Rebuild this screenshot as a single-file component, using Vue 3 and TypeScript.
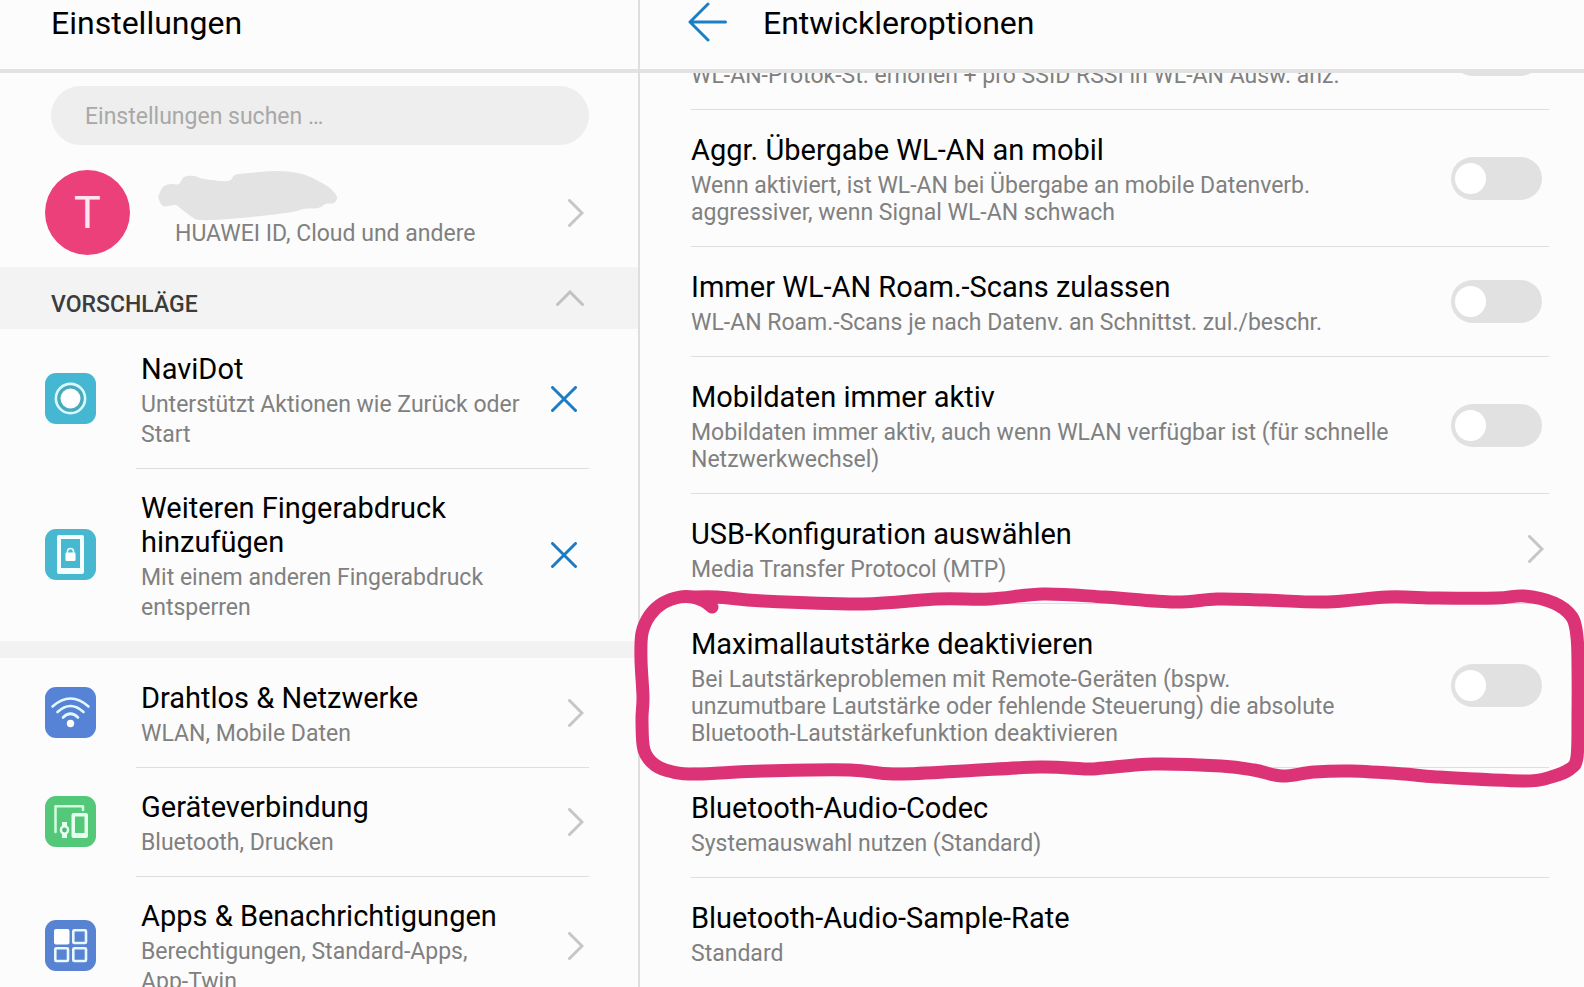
<script setup lang="ts">
import { ref } from 'vue'

type Point = [number, number]
type IconName = 'dot' | 'lock' | 'wifi' | 'devices' | 'apps'

interface Entry {
  id: string
  title: string
  text: string
  icon: IconName
}

interface Option {
  id: string
  title?: string
  text: string
  kind: 'switch' | 'link' | 'plain'
  on?: boolean
  marked?: boolean
}

const query = ref('')

const suggestions: Entry[] = [
  { id: 'navidot', title: 'NaviDot', text: 'Unterstützt Aktionen wie Zurück oder Start', icon: 'dot' },
  { id: 'finger', title: 'Weiteren Fingerabdruck hinzufügen', text: 'Mit einem anderen Fingerabdruck entsperren', icon: 'lock' },
]

const categories: Entry[] = [
  { id: 'wireless', title: 'Drahtlos & Netzwerke', text: 'WLAN, Mobile Daten', icon: 'wifi' },
  { id: 'devices', title: 'Geräteverbindung', text: 'Bluetooth, Drucken', icon: 'devices' },
  { id: 'apps', title: 'Apps & Benachrichtigungen', text: 'Berechtigungen, Standard-Apps,\nApp-Twin', icon: 'apps' },
]

const options = ref<Option[]>([
  { id: 'protocol', text: 'WL-AN-Protok-St. erhöhen + pro SSID RSSI in WL-AN Ausw. anz.', kind: 'switch', on: false },
  { id: 'handover', title: 'Aggr. Übergabe WL-AN an mobil', text: 'Wenn aktiviert, ist WL-AN bei Übergabe an mobile Datenverb.\naggressiver, wenn Signal WL-AN schwach', kind: 'switch', on: false },
  { id: 'roam', title: 'Immer WL-AN Roam.-Scans zulassen', text: 'WL-AN Roam.-Scans je nach Datenv. an Schnittst. zul./beschr.', kind: 'switch', on: false },
  { id: 'mobile', title: 'Mobildaten immer aktiv', text: 'Mobildaten immer aktiv, auch wenn WLAN verfügbar ist (für schnelle Netzwerkwechsel)', kind: 'switch', on: false },
  { id: 'usb', title: 'USB-Konfiguration auswählen', text: 'Media Transfer Protocol (MTP)', kind: 'link' },
  { id: 'volume', title: 'Maximallautstärke deaktivieren', text: 'Bei Lautstärkeproblemen mit Remote-Geräten (bspw.\nunzumutbare Lautstärke oder fehlende Steuerung) die absolute\nBluetooth-Lautstärkefunktion deaktivieren', kind: 'switch', on: false, marked: true },
  { id: 'codec', title: 'Bluetooth-Audio-Codec', text: 'Systemauswahl nutzen (Standard)', kind: 'plain' },
  { id: 'rate', title: 'Bluetooth-Audio-Sample-Rate', text: 'Standard', kind: 'plain' },
])

/* Smooth curve through a list of points (Catmull-Rom as cubic Béziers). */
function smooth(points: Point[]): string {
  let d = `M${points[0][0]} ${points[0][1]}`
  for (let i = 0; i < points.length - 1; i++) {
    const a = points[Math.max(i - 1, 0)]
    const b = points[i]
    const c = points[i + 1]
    const e = points[Math.min(i + 2, points.length - 1)]
    d += `C${b[0] + (c[0] - a[0]) / 6} ${b[1] + (c[1] - a[1]) / 6} ${c[0] - (e[0] - b[0]) / 6} ${c[1] - (e[1] - b[1]) / 6} ${c[0]} ${c[1]}`
  }
  return d
}

const marker = smooth([
  [82, 21], [74, 15], [63, 11], [50, 11], [33, 17], [20, 29], [12, 47], [11, 74], [13, 111], [12, 134], [14, 164],
  [25, 179], [43, 186], [67, 188], [133, 185], [220, 184], [263, 188], [333, 185], [410, 181], [457, 183],
  [474, 182], [524, 178], [591, 180], [624, 184], [652, 190], [684, 186], [721, 185], [774, 188], [807, 191],
  [894, 195], [921, 191], [940, 183], [947, 171], [948, 130], [948, 80], [947, 51], [942, 31], [924, 17], [894, 10],
  [867, 12], [807, 12], [757, 11], [697, 16], [634, 14], [587, 13], [544, 16], [474, 11], [413, 8], [360, 13],
  [307, 13], [233, 18], [133, 15], [87, 11], [63, 11],
])

const blot = smooth([
  [1, 27], [6, 17], [14, 14], [22, 14], [27, 7], [37, 6], [47, 9], [71, 11], [78, 5], [92, 3], [120, 1], [145, 4],
  [165, 13], [174, 19], [180, 27], [177, 33], [169, 34], [161, 38], [147, 39], [129, 43], [72, 49], [43, 50],
  [35, 47], [23, 38], [18, 35], [6, 36], [1, 27],
])
</script>

<template>
  <div class="screen">
    <section class="pane pane-left">
      <header class="bar"><h1>Einstellungen</h1></header>

      <div class="search">
        <input v-model="query" type="search" aria-label="Einstellungen suchen" placeholder="Einstellungen suchen …" />
      </div>

      <a class="account" href="#account">
        <span class="avatar">T</span>
        <span class="account-text">
          <svg class="blot" viewBox="0 0 181 51" aria-hidden="true"><path :d="blot" /></svg>
          <span class="text">HUAWEI ID, Cloud und andere</span>
        </span>
        <svg class="chevron" viewBox="0 0 16 28" aria-hidden="true"><path d="M1.5 1.5 14 14 1.5 26.5" /></svg>
      </a>

      <button class="group" type="button" aria-expanded="true">
        <span>VORSCHLÄGE</span>
        <svg class="fold" viewBox="0 0 28 16" aria-hidden="true"><path d="M1.5 14.5 14 2 26.5 14.5" /></svg>
      </button>

      <ul class="entries entries-suggested">
        <li v-for="item in suggestions" :key="item.id" class="entry">
          <svg v-if="item.icon === 'dot'" class="icon" viewBox="0 0 51 51" aria-hidden="true">
            <rect width="51" height="51" rx="11" fill="#45b7d2" />
            <circle cx="25.5" cy="25.5" r="14.6" fill="#4aa9bc" stroke="#d9fbff" stroke-width="2.6" />
            <circle cx="25.5" cy="25.5" r="10" fill="#fff" />
          </svg>
          <svg v-else class="icon" viewBox="0 0 51 51" aria-hidden="true">
            <rect width="51" height="51" rx="11" fill="#48b8d0" />
            <path fill="#f4ffff" fill-rule="evenodd" d="M14 6h23q2 0 2 2v35q0 2-2 2H14q-2 0-2-2V8q0-2 2-2zM16 10v29h19V10z" />
            <rect x="20.5" y="23.5" width="10" height="8.5" rx="1" fill="#fff" />
            <path d="M22.5 24v-1.5a3 3 0 0 1 6 0V24" fill="none" stroke="#eaffff" stroke-width="1.5" />
          </svg>
          <div class="body">
            <h3>{{ item.title }}</h3>
            <p class="text">{{ item.text }}</p>
          </div>
          <button class="dismiss" type="button" :aria-label="item.title + ' ausblenden'">
            <svg viewBox="0 0 26 26" aria-hidden="true"><path d="M1.5 1.5 24.5 24.5M24.5 1.5 1.5 24.5" /></svg>
          </button>
        </li>
      </ul>

      <nav class="entries">
        <a v-for="item in categories" :key="item.id" class="entry" :href="'#' + item.id">
          <svg v-if="item.icon === 'wifi'" class="icon" viewBox="0 0 51 51" aria-hidden="true">
            <rect width="51" height="51" rx="11" fill="#5783d6" />
            <g fill="none" stroke="#e4f8ff" stroke-width="2.6" stroke-linecap="round">
              <path d="M7.5 19.5Q25.5 3.5 43.5 19.5" />
              <path d="M12.5 25Q25.5 13 38.5 25" />
              <path d="M18 30.5Q25.5 23 33 30.5" />
            </g>
            <circle cx="25.5" cy="36.5" r="3.7" fill="#fff" />
          </svg>
          <svg v-else-if="item.icon === 'devices'" class="icon" viewBox="0 0 51 51" aria-hidden="true">
            <rect width="51" height="51" rx="11" fill="#53c878" />
            <path d="M10.5 36V10.3H38V14" fill="none" stroke="#d3ffe0" stroke-width="2.5" stroke-linecap="round" stroke-linejoin="round" />
            <path fill="#e6fff0" fill-rule="evenodd" d="M28.5 17H41q2 0 2 2v21q0 2-2 2H28.5q-2 0-2-2V19q0-2 2-2zM30 20.5V37h9.5V20.5z" />
            <path fill="#e6fff0" d="M17 26h5v5h-5zM17 37h5v5h-5z" />
            <circle cx="19.5" cy="34" r="3.6" fill="#53b878" stroke="#e6fff0" stroke-width="2.4" />
          </svg>
          <svg v-else class="icon" viewBox="0 0 51 51" aria-hidden="true">
            <rect width="51" height="51" rx="11" fill="#5783d2" />
            <rect x="9" y="9" width="15.5" height="15.5" rx="2" fill="#fff" />
            <g fill="none" stroke="#e8f8ff" stroke-width="2.6">
              <rect x="28.3" y="10.3" width="12.7" height="12.7" rx="1" />
              <rect x="10.3" y="28.3" width="12.7" height="12.7" rx="1" />
              <rect x="28.3" y="28.3" width="12.7" height="12.7" rx="1" />
            </g>
          </svg>
          <div class="body">
            <h3>{{ item.title }}</h3>
            <p class="text">{{ item.text }}</p>
          </div>
          <svg class="chevron" viewBox="0 0 16 28" aria-hidden="true"><path d="M1.5 1.5 14 14 1.5 26.5" /></svg>
        </a>
      </nav>
    </section>

    <section class="pane pane-right">
      <header class="bar">
        <button class="back" type="button" aria-label="Zurück">
          <svg viewBox="0 0 39 40" aria-hidden="true"><path d="M37.5 20H2M20 2 2 20 20 38" /></svg>
        </button>
        <h2>Entwickleroptionen</h2>
      </header>

      <ul class="options">
        <li v-for="option in options" :key="option.id" class="option">
          <div class="option-body">
            <h3 v-if="option.title && option.kind === 'switch'"><label :for="option.id">{{ option.title }}</label></h3>
            <h3 v-else-if="option.title"><a :href="'#' + option.id">{{ option.title }}</a></h3>
            <p :id="option.id + '-text'" class="text">{{ option.text }}</p>
          </div>
          <input
            v-if="option.kind === 'switch'"
            :id="option.id"
            v-model="option.on"
            class="switch"
            type="checkbox"
            role="switch"
            :aria-label="option.title ?? option.text"
            :aria-describedby="option.id + '-text'"
          />
          <svg v-else-if="option.kind === 'link'" class="chevron" viewBox="0 0 16 28" aria-hidden="true"><path d="M1.5 1.5 14 14 1.5 26.5" /></svg>
          <svg v-if="option.marked" class="marker" viewBox="0 0 954 200" preserveAspectRatio="none" aria-hidden="true"><path :d="marker" /></svg>
        </li>
      </ul>
    </section>
  </div>
</template>

<style>
body {
  margin: 0;
  background: #fcfcfc;
}
</style>

<style scoped>
.screen {
  display: grid;
  grid-template-columns: 640fr 944fr;
  height: 100vh;
  overflow: hidden;
  background: #fcfcfc;
  color: #000;
  font-family: Roboto, "Liberation Sans", sans-serif;
}

h1,
h2,
h3,
p,
ul {
  margin: 0;
  padding: 0;
  font-weight: 400;
  list-style: none;
}

a {
  color: inherit;
  text-decoration: none;
}

button {
  margin: 0;
  padding: 0;
  border: 0;
  background: none;
  color: inherit;
  font: inherit;
}

svg {
  display: block;
  flex: none;
}

.pane {
  min-width: 0;
}

.pane-left {
  border-right: 2px solid #dedede;
}

.bar {
  position: relative;
  z-index: 1;
  display: flex;
  align-items: flex-start;
  box-sizing: border-box;
  height: 73px;
  border-bottom: 4px solid #e2e2e2;
  background: #fcfcfc;
}

.pane-left .bar {
  padding-left: 51px;
}

.pane-right .bar {
  gap: 36px;
  padding-left: 48px;
}

h1,
h2 {
  padding-top: 3px;
  font-size: 32px;
  line-height: 40px;
}

h3 {
  font-size: 29px;
  line-height: 34px;
}

.text {
  color: #808080;
  font-size: 23px;
  white-space: pre-line;
}

.back {
  padding-top: 2px;
}

.back svg {
  width: 39px;
  height: 40px;
  fill: none;
  stroke: #1b7fc6;
  stroke-width: 3;
  stroke-linecap: round;
  stroke-linejoin: round;
}

.search {
  padding: 13px 49px 13px 51px;
}

.search input {
  display: block;
  box-sizing: border-box;
  width: 100%;
  height: 59px;
  padding: 2px 34px 0;
  border: 0;
  border-radius: 30px;
  outline: none;
  background: #eee;
  color: #333;
  font: 23px Roboto, "Liberation Sans", sans-serif;
  appearance: none;
}

.search input::placeholder {
  color: #a8a8a8;
  opacity: 1;
}

.account {
  display: flex;
  align-items: center;
  height: 109px;
  padding: 0 54px 0 45px;
}

.avatar {
  flex: none;
  width: 85px;
  border-radius: 50%;
  background: #ec407a;
  color: #fde4ee;
  font-size: 45px;
  line-height: 85px;
  text-align: center;
}

.account-text {
  flex: 1;
  padding: 0 0 8px 27px;
}

.account-text .text {
  display: block;
  padding-left: 18px;
  line-height: 26px;
}

.blot {
  width: 181px;
  height: 51px;
  fill: #e3e3e3;
}

.chevron {
  width: 16px;
  height: 28px;
  fill: none;
  stroke: #c6c6c6;
  stroke-width: 3;
  stroke-linecap: round;
}

.group {
  display: flex;
  align-items: center;
  justify-content: space-between;
  width: 100%;
  height: 62px;
  padding: 0 54px 0 51px;
  background: #f3f3f3;
  color: #3c3c3c;
  font-size: 23px;
  font-weight: 500;
  line-height: 26px;
}

.group span {
  padding-top: 14px;
}

.fold {
  width: 28px;
  height: 16px;
  fill: none;
  stroke: #c2c2c2;
  stroke-width: 3;
  stroke-linecap: round;
}

.entries-suggested {
  border-bottom: 17px solid #f2f2f2;
}

.entry {
  position: relative;
  display: flex;
  align-items: center;
  padding: 0 54px 0 45px;
}

.entry:not(:last-child)::after {
  content: "";
  position: absolute;
  right: 49px;
  bottom: -1px;
  left: 136px;
  height: 1px;
  background: #dedede;
}

.icon {
  width: 51px;
  height: 51px;
}

.body {
  flex: 1;
  min-width: 0;
  padding: 23px 0 18px 45px;
}

.body .text {
  padding-top: 4px;
  line-height: 30px;
}

.dismiss {
  flex: none;
  padding: 0 7px 0 16px;
}

.dismiss svg {
  width: 26px;
  height: 26px;
  fill: none;
  stroke: #1b7cc4;
  stroke-width: 3;
  stroke-linecap: round;
}

/* The list stands scrolled, its first row half under the bar. */
.options {
  margin: -73px 35px 0 51px;
}

.option {
  position: relative;
  display: flex;
  align-items: center;
  justify-content: space-between;
  box-sizing: border-box;
  min-height: 110px;
  padding-right: 7px;
  border-bottom: 1px solid #dedede;
}

.option:last-child {
  border-bottom-color: transparent;
}

.option-body {
  align-self: flex-end;
  max-width: 720px;
  padding: 23px 0 20px;
}

.option .text {
  padding-top: 5px;
  line-height: 27px;
}

.option .chevron {
  margin-right: -2px;
}

.switch {
  flex: none;
  display: flex;
  align-items: center;
  box-sizing: border-box;
  width: 91px;
  height: 43px;
  margin: 0;
  padding: 0 4px;
  border-radius: 22px;
  background: #e1e1e1;
  appearance: none;
}

.switch::before {
  content: "";
  width: 31px;
  height: 31px;
  border-radius: 50%;
  background: #fff;
}

.switch:checked {
  justify-content: flex-end;
  background: #1b7fc6;
}

.marker {
  position: absolute;
  top: -18px;
  left: -61px;
  width: calc(100% + 96px);
  height: calc(100% + 37px);
  overflow: visible;
  fill: none;
  stroke: #db3375;
  stroke-width: 13;
  stroke-linecap: round;
  stroke-linejoin: round;
  pointer-events: none;
}
</style>
